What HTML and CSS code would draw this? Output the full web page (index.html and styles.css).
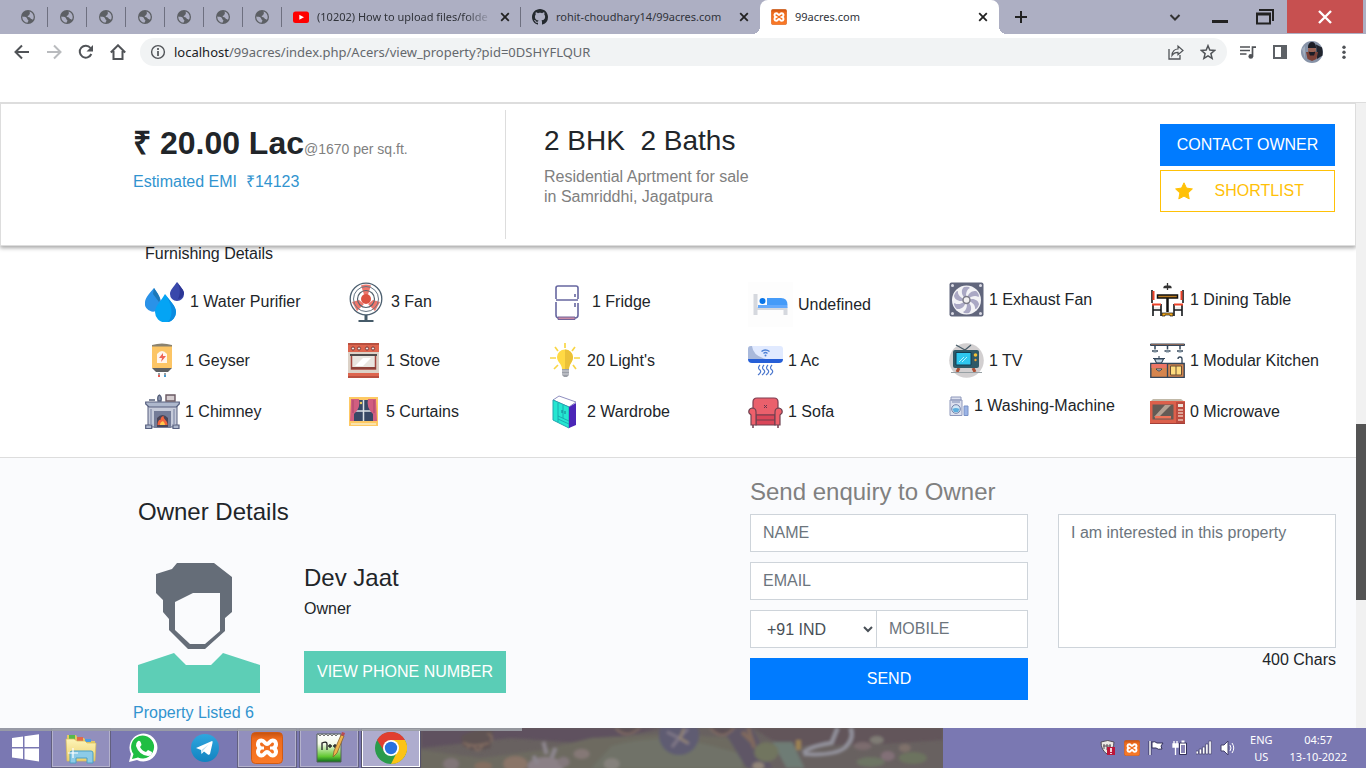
FILE: index.html
```html
<!DOCTYPE html>
<html lang="en">
<head>
<meta charset="utf-8">
<title>99acres.com</title>
<link rel="stylesheet" href="styles.css">
</head>
<body>
<svg class="defs" aria-hidden="true">
  <defs>
    <linearGradient id="orange" x1="0" y1="0" x2="0" y2="1"><stop offset="0" stop-color="#c4510f"/><stop offset=".2" stop-color="#ee6a1c"/><stop offset="1" stop-color="#fa7a28"/></linearGradient>
    <linearGradient id="paper" x1="0" y1="0" x2="0" y2="1"><stop offset="0" stop-color="#fff"/><stop offset=".35" stop-color="#f4fae8"/><stop offset=".8" stop-color="#62c832"/><stop offset="1" stop-color="#0c6a1c"/></linearGradient>
    <linearGradient id="folder" x1="0" y1="0" x2="0" y2="1"><stop offset="0" stop-color="#fdf4b8"/><stop offset="1" stop-color="#ecd06c"/></linearGradient>
    <linearGradient id="sky" x1="0" y1="0" x2="0" y2="1"><stop offset="0" stop-color="#2fa6df"/><stop offset="1" stop-color="#1283c0"/></linearGradient>
    <filter id="soft" x="-5%" y="-5%" width="110%" height="110%"><feGaussianBlur stdDeviation="1.500"/></filter>
  </defs>
  <symbol id="globe" viewBox="0 0 16 16"><circle cx="8" cy="8" r="7" fill="#5c5f64"/><path d="M2.300 7.500C4 8 5.500 7.500 6.500 8.500c1 1 .5 1.600 1.300 2.200.8.500.8 1 .2 1.700-.4.500-.3 1-.5 1.400C4.500 13.500 2.200 11 2.300 7.500z" fill="#adafc3"/><path d="M9.500 2.500c2.400.7 4.200 2.900 4.200 5.500 0 1-.3 2-.8 2.800-.5-.8-1.200-.9-2-.9-.6-1.200-1.400-1.700-2.700-1.800-.9-.5-.6-1.600.3-1.700 1-.2.700-1.200 1.200-1.700.6-.6 0-1.300-.2-2.200z" fill="#adafc3"/></symbol>
  <symbol id="close" viewBox="0 0 10 10"><path d="M1.200 1.200l7.600 7.600M8.800 1.200L1.200 8.800" fill="none" stroke="currentColor" stroke-width="1.800"/></symbol>
  <symbol id="xampp" viewBox="0 0 32 32"><rect x=".5" y=".5" width="31" height="31" rx="4" fill="url(#orange)" stroke="#cf5b14"/><path d="M10.500 8.500c3 0 3.300 3.500 5.500 3.500s2.500-3.500 5.500-3.500c3.500 0 5 4.500 1.500 7.500 3.500 3 2 7.500-1.500 7.500-3 0-3.300-3.500-5.500-3.500s-2.500 3.500-5.500 3.500C7 23.500 5.500 19 9 16 5.500 13 7 8.500 10.500 8.500z" fill="none" stroke="#fff" stroke-width="4"/><path d="M10 16h3M19 16h3" stroke="#fff" stroke-width="3"/></symbol>
</svg>

<header class="browser">
  <nav class="tabs" aria-label="Tabs">
    <button class="pin" aria-label="Tab 1"><svg><use href="#globe"/></svg></button>
    <button class="pin" aria-label="Tab 2"><svg><use href="#globe"/></svg></button>
    <button class="pin" aria-label="Tab 3"><svg><use href="#globe"/></svg></button>
    <button class="pin" aria-label="Tab 4"><svg><use href="#globe"/></svg></button>
    <button class="pin" aria-label="Tab 5"><svg><use href="#globe"/></svg></button>
    <button class="pin" aria-label="Tab 6"><svg><use href="#globe"/></svg></button>
    <button class="pin" aria-label="Tab 7"><svg><use href="#globe"/></svg></button>
    <div class="tab tab-ruled">
      <svg class="fav" viewBox="0 0 16 16"><rect y="2.500" width="16" height="11.500" rx="2.500" fill="#f00"/><path d="M6.300 5.700v5L11 8.200z" fill="#fff"/></svg>
      <span class="tab-title faded">(10202) How to upload files/folde</span>
      <button class="tab-x" aria-label="Close tab"><svg><use href="#close"/></svg></button>
    </div>
    <div class="tab">
      <svg class="fav" viewBox="0 0 16 16"><path fill="#24292f" d="M8 0C3.580 0 0 3.580 0 8c0 3.540 2.290 6.530 5.470 7.590.4.070.55-.17.55-.38 0-.19-.01-.82-.01-1.490-2.010.37-2.530-.49-2.690-.94-.09-.23-.48-.94-.82-1.130-.28-.15-.68-.52-.01-.53.63-.01 1.080.58 1.230.82.720 1.210 1.870.87 2.330.66.070-.52.280-.87.510-1.070-1.780-.2-3.640-.89-3.640-3.950 0-.87.310-1.590.82-2.150-.08-.2-.36-1.020.08-2.120 0 0 .67-.21 2.200.82.640-.18 1.320-.27 2-.27s1.360.09 2 .27c1.530-1.040 2.200-.82 2.200-.82.440 1.100.16 1.920.08 2.120.51.560.82 1.270.82 2.150 0 3.070-1.870 3.750-3.650 3.950.290.250.540.730.540 1.480 0 1.070-.01 1.930-.01 2.200 0 .21.150.46.550.38A8.010 8.010 0 0 0 16 8c0-4.420-3.580-8-8-8z"/></svg>
      <span class="tab-title">rohit-choudhary14/99acres.com</span>
      <button class="tab-x" aria-label="Close tab"><svg><use href="#close"/></svg></button>
    </div>
    <div class="tab tab-active">
      <svg class="fav"><use href="#xampp"/></svg>
      <span class="tab-title">99acres.com</span>
      <button class="tab-x" aria-label="Close tab"><svg><use href="#close"/></svg></button>
    </div>
    <button class="new-tab" aria-label="New tab"><svg viewBox="0 0 12 12"><path d="M6 0v12M0 6h12" stroke="#222" stroke-width="2"/></svg></button>
    <div class="window-controls">
      <button aria-label="Search tabs"><svg viewBox="0 0 18 16"><path d="M4.500 6L9 10.500 13.500 6" fill="none" stroke="#333" stroke-width="2"/></svg></button>
      <button aria-label="Minimize"><svg viewBox="0 0 18 16"><path d="M1 12.500h16" stroke="#222" stroke-width="3"/></svg></button>
      <button aria-label="Restore"><svg viewBox="0 0 18 16"><path d="M1 4.500h13v10H1zM1 5.500h13" fill="none" stroke="#222" stroke-width="2"/><path d="M3 1h14v11" fill="none" stroke="#222" stroke-width="2"/></svg></button>
      <button class="window-close" aria-label="Close"><svg viewBox="0 0 18 16"><path d="M3 2l12 12M15 2L3 14" stroke="#fff" stroke-width="2.400"/></svg></button>
    </div>
  </nav>
  <div class="toolbar">
    <button aria-label="Back"><svg viewBox="0 0 16 16"><path d="M15 8H2M8 1.500L1.500 8 8 14.500" fill="none" stroke="#505357" stroke-width="2"/></svg></button>
    <button aria-label="Forward"><svg viewBox="0 0 16 16"><path d="M1 8h13M8 1.500L14.500 8 8 14.500" fill="none" stroke="#b9bbbe" stroke-width="2"/></svg></button>
    <button aria-label="Reload"><svg viewBox="0 0 16 16"><path d="M13.300 10A6 6 0 1 1 12.500 4" fill="none" stroke="#505357" stroke-width="2"/><path d="M15 1v6.500H8.500z" fill="#505357"/></svg></button>
    <button aria-label="Home"><svg viewBox="0 0 16 16"><path d="M.8 8.500L8 1.300l7.200 7.200M3.500 7v8h9V7" fill="none" stroke="#505357" stroke-width="2"/></svg></button>
    <div class="omnibox">
      <svg class="info" viewBox="0 0 16 16"><circle cx="8" cy="8" r="6.400" fill="none" stroke="#505357" stroke-width="1.400"/><path d="M8 7v5M8 4v2" stroke="#505357" stroke-width="1.700"/></svg>
      <div class="url" contenteditable="true" role="textbox" aria-label="Address" spellcheck="false"><span class="host">localhost</span>/99acres/index.php/Acers/view_property?pid=0DSHYFLQUR</div>
      <button aria-label="Share"><svg viewBox="0 0 16 16"><path d="M1 5v10h11v-4" fill="none" stroke="#505357" stroke-width="1.300"/><path d="M4 11.500C4 7 7 5 10 5V2l5 4.500-5 4.300V8.300C7.500 8.300 5.500 9 4 11.500z" fill="none" stroke="#505357" stroke-width="1.200"/></svg></button>
      <button aria-label="Bookmark"><svg viewBox="0 0 16 16"><path d="M8 1.700l1.800 4.400 4.800.4-3.700 3.100 1.200 4.700L8 11.800l-4.100 2.500 1.200-4.700L1.400 6.500l4.800-.4z" fill="none" stroke="#505357" stroke-width="1.500"/></svg></button>
    </div>
    <button aria-label="Media"><svg viewBox="0 0 16 16"><path d="M0 3h10M0 6.500h10M0 10h6.500" stroke="#505357" stroke-width="1.600"/><path d="M12.500 12.500V3.200H16" fill="none" stroke="#505357" stroke-width="1.700"/><circle cx="10.800" cy="12.400" r="2.400" fill="#505357"/></svg></button>
    <button aria-label="Side panel"><svg viewBox="0 0 16 16"><path d="M1 1h14v14H1z" fill="#5d6166"/><path d="M3 3h6v10H3z" fill="#fff"/></svg></button>
    <button class="avatar" aria-label="Profile"><svg viewBox="0 0 22 22"><circle cx="11" cy="11" r="11" fill="#8793a8"/><path d="M15 3.500l6 3q1 4 .5 8L16 18z" fill="#20242d"/><path d="M5 11l1.500 7 4.500 2 4.500-2L17 11z" fill="#7c4238"/><circle cx="11" cy="9" r="4" fill="#9a6456"/><path d="M7 6a4 5 0 0 1 8 0v1H7zM7.500 10.500q3.500 1 7 0L13 14.500H9z" fill="#1b1d26"/><path d="M1 8l3-3v13z" fill="#a2adbd"/></svg></button>
    <button aria-label="Menu"><svg viewBox="0 0 16 16"><circle cx="8" cy="3.200" r="1.700" fill="#505357"/><circle cx="8" cy="8.200" r="1.700" fill="#505357"/><circle cx="8" cy="13.200" r="1.700" fill="#505357"/></svg></button>
  </div>
</header>

<div class="viewport">
  <main class="page">
    <section class="summary">
      <div class="price">
        <p><strong>₹ 20.00 Lac</strong><small>@1670 per sq.ft.</small></p>
        <a href="#emi">Estimated EMI&nbsp; ₹14123</a>
      </div>
      <div class="config">
        <h1>2 BHK&nbsp; 2 Baths</h1>
        <p>Residential Aprtment for sale<br>in Samriddhi, Jagatpura</p>
      </div>
      <div class="actions">
        <button class="btn btn-blue">CONTACT OWNER</button>
        <button class="btn btn-star"><svg viewBox="0 0 18 18"><path d="M9 .8l2.500 5.300 5.900.8-4.300 4.100 1.100 5.900L9 14.100l-5.200 2.800L4.900 11 .6 6.900l5.900-.8z" fill="#ffc107" stroke="#ffc107" stroke-linejoin="round"/></svg><span>SHORTLIST</span></button>
      </div>
    </section>

    <section class="furnishing">
      <h2>Furnishing Details</h2>
      <ul>
        <li><svg class="i40" viewBox="0 0 40 40"><path d="M9 6C13 12 17 17 16 23a8 8 0 0 1-16-3C.5 15 5 11 9 6z" fill="#2a92e8"/><path d="M9 6C13 12 17 17 14 20L8 12z" fill="#1c78b8"/><path d="M32 0c3.500 5 7 8 7 12a7 7 0 0 1-14 0c0-4 3.500-7 7-12z" fill="#3948ab"/><path d="M32 0c3 5 4 11 1 17a7 7 0 0 0 6-6c0-3-4-7-7-11z" fill="#2c3695"/><path d="M20 12c5 7 11 12 11 18a10.500 10.500 0 0 1-21 0c0-6 6-11 10-18z" fill="#04a4f4"/><path d="M20 12c5 7 11 12 11 18a10 10 0 0 1-8 10c6-7 4-18-3-28z" fill="#0b8be0"/></svg>1 Water Purifier</li>
        <li><svg class="i40" viewBox="0 0 40 40"><circle cx="20" cy="17" r="15.800" fill="#fff" stroke="#4d6070" stroke-width="1.300"/><path d="M15 3.500q5-2 10 0l-3 9h-4zM34 20l-5 9-7-7 5-4zM6 20l5 9 7-7-5-4z" fill="#ef766b"/><circle cx="20" cy="17" r="12.500" fill="none" stroke="#667482"/><circle cx="20" cy="17" r="8.500" fill="none" stroke="#56636e" stroke-width="1.200"/><circle cx="20" cy="17" r="5" fill="#dc5342"/><path d="M18.500 33h3v5h6v2h-15v-2h6z" fill="#465b69"/></svg>3 Fan</li>
        <li><svg class="i40" viewBox="0 0 40 40"><path d="M9 17V6q0-2 2-2h18q2 0 2 2v11M9 18h22M9 20v13q0 3 3 3h16q3 0 3-3V21M28 12v3M28 21v4" fill="none" stroke="#6767a0" stroke-width="1.600"/><path d="M11 35h17v2.500H11z" fill="#c98ba5" stroke="#72649a"/></svg>1 Fridge</li>
        <li><svg class="i45" viewBox="0 0 45 45"><path d="M0 0h45v45H0z" fill="#fdfdfd"/><path d="M5.500 12h4v13h30v8h-4v-5h-26v5h-4z" fill="#d5d8de"/><path d="M10 23h29.500v3H10z" fill="#65aafc"/><path d="M19 16h14q6.500 0 6.500 7H19z" fill="#459bf8"/><circle cx="14.500" cy="19" r="3" fill="#0975e8"/></svg>Undefined</li>
        <li><svg class="i35" viewBox="0 0 35 35"><rect x=".5" y=".5" width="34" height="34" rx="2" fill="#61667c"/><circle cx="17.500" cy="18" r="14.500" fill="#f3f3f6"/><g fill="#aaa8c4"><path id="blade" d="M16 16C12 13 12 7 15 5q5-1 6 1c-4 2-4 6-4 10z"/><use href="#blade" transform="rotate(60 17.500 18)"/><use href="#blade" transform="rotate(120 17.500 18)"/><use href="#blade" transform="rotate(180 17.500 18)"/><use href="#blade" transform="rotate(240 17.500 18)"/><use href="#blade" transform="rotate(300 17.500 18)"/></g><circle cx="17.500" cy="18" r="3.500" fill="#f2f0f0" stroke="#7c7c88" stroke-width="1.500"/><g fill="#dcdce6"><circle cx="3.500" cy="3.500" r="1.500"/><circle cx="31.500" cy="3.500" r="1.500"/><circle cx="3.500" cy="31.500" r="1.500"/><circle cx="31.500" cy="31.500" r="1.500"/></g></svg>1 Exhaust Fan</li>
        <li><svg class="i35" viewBox="0 0 35 35"><path d="M17.500 1v7M14 5.500q0-1.500 3.500-1.500t3.500 1.500z" fill="#555" stroke="#333" stroke-width="1.300"/><path d="M7.500 13h20v3h-20z" fill="#b87b21" stroke="#111" stroke-width="1.500"/><path d="M17.500 16v14" stroke="#111" stroke-width="2.500"/><path d="M12 34v-3h11v3h-3v-1h-5v1z" fill="#f0a51b" stroke="#111" stroke-width=".7"/><path d="M2 8v13M11 22v12M3 23v11M3 28h8M33 8v13M24 22v12M32 23v11M24 28h8" fill="none" stroke="#15171a" stroke-width="1.600"/><path d="M3.500 9v9M31.500 9v9M2 22.500h9M24 22.500h9" stroke="#ed4228" stroke-width="2"/><path d="M4 26h6M25 26h6" stroke="#ddd"/></svg>1 Dining Table</li>

        <li><svg class="i35" viewBox="0 0 35 35"><path d="M7 3q10-3 20 0v22H7z" fill="#fcc565"/><path d="M7 2q10-3 20 0v1.500H7z" fill="#8a826f"/><path d="M7 25h20l-4 4H11z" fill="#5e6062"/><path d="M12 20v-9q5-6 10 0v9z" fill="#fff6ee"/><path d="M18 10l-4 5h3l-1 4 5-6h-3z" fill="#ef6556"/><path d="M14 30v2M20 30v2" stroke="#9aa1a5" stroke-width="2"/><path d="M14 32v2" stroke="#ed5950" stroke-width="2"/><path d="M20 32v2" stroke="#469bd0" stroke-width="2"/></svg>1 Geyser</li>
        <li><svg class="i35" viewBox="0 0 35 35"><path d="M2 2h31v33H2z" fill="#dcd2c7"/><path d="M2 1h31v8H2zM2 30h31v3H2z" fill="#dd654e"/><path d="M2 0h31v2H2zM2 33h31v2H2z" fill="#b94f3f"/><g fill="#eae3dc" stroke="#7f3938"><circle cx="7" cy="5.500" r="1.600"/><circle cx="13" cy="5.500" r="1.600"/><circle cx="21" cy="5.500" r="1.600"/><circle cx="27" cy="5.500" r="1.600"/></g><path d="M4 11h27v2H4z" fill="#4f4b4b"/><path d="M5.500 13v13h24V13" fill="#e9e5df" stroke="#a4463d" stroke-width="1.500"/><path d="M9 23l8-8h8l-8 8z" fill="#fff"/><path d="M5 25h25" stroke="#8d4138" stroke-width="2"/></svg>1 Stove</li>
        <li><svg class="i35" viewBox="0 0 35 35"><path d="M10 14a8 7.500 0 0 1 16 0c0 5-4 7-4 12h-7c0-5-5-7-5-12z" fill="#ffd944"/><path d="M18 6.500a8 8 0 0 1 8 7.500c0 5-4 7-4 12h-4z" fill="#ebc138"/><path d="M15 26h7v6l-2 2h-3l-2-2z" fill="#9b9fa7"/><path d="M15 28h7M15 31h7" stroke="#d5d6dc"/><path d="M18 0v5M8 4l3 4M28 4l-3 4M3 15h6M27 15h6M7 26l4-4M29 26l-3-4" stroke="#f8d647" stroke-width="1.700"/></svg>20 Light's</li>
        <li><svg class="i35" viewBox="0 0 35 35"><path d="M0 6q0-3 3-3h29q3 0 3 3v10H0z" fill="#e1eaff"/><path d="M0 6q0-3 3-3h1q1 10 14 13H0z" fill="#a9b9db"/><path d="M0 16h35q0 4-4 4H4q-4 0-4-4z" fill="#265fd7"/><path d="M13.500 8.500q4-3 8 0M15.500 10.500q2-2 4 0" fill="none" stroke="#4f82d6" stroke-width="1.300"/><circle cx="17.500" cy="12.500" r="1" fill="#4f82d6"/><path d="M12 22q-3 3 0 5 2 2-2 5M16 22q-3 3 0 5 2 2-2 5M20 22q-3 3 0 5 2 2-2 5M24 22q-3 3 0 5 2 2-2 5" fill="none" stroke="#4c78ce" stroke-width="1.200"/></svg>1 Ac</li>
        <li><svg class="i35" viewBox="0 0 35 35"><circle cx="17.500" cy="17.500" r="17.300" fill="#d2cfd0"/><path d="M7 2l9 5 6-5" fill="none" stroke="#475c68" stroke-width="1.300"/><path d="M8 29l2-4M26 29l-2-4" stroke="#ad5035" stroke-width="3"/><rect x="4" y="7" width="26" height="18" rx="2" fill="#2f5967"/><path d="M7 9.500h15v12.500H7z" fill="#2ec7ef" stroke="#123d52"/><path d="M10 19l5-5M13 19l5-5" stroke="#b5f1ff"/><circle cx="26.500" cy="12" r="1.800" fill="#f2c233"/><circle cx="26.500" cy="17" r="1.200" fill="#f2a233"/><path d="M2 29.500h31" stroke="#97a0a4"/></svg>1 TV</li>
        <li><svg class="i35" viewBox="0 0 35 35"><path d="M.5 1h34v1.500H.5z" fill="#df8755" stroke="#34465a"/><path d="M5 3v3M17.500 3v3M30 3v3" stroke="#34465a" stroke-width="1.500"/><path d="M2 8h6M14.500 8h6M27 8h6" stroke="#34465a" stroke-width="1.500"/><path d="M3.500 7.500q1.500-2.500 3 0v2h-3zM16 7.500q1.500-2.500 3 0v2h-3zM28.500 7.500q1.500-2.500 3 0v2h-3z" fill="#7a8c99"/><path d="M4.500 16h9l-2 4h-5zM3 15.500h12M9 15v-2" fill="#c4d6e2" stroke="#34465a" stroke-width="1.100"/><path d="M28 16q0-2 2-2t2 2v4" fill="none" stroke="#34465a" stroke-width="1.300"/><path d="M.8 20.500h33.400v14H.8z" fill="#d5854e" stroke="#34465a" stroke-width="1.400"/><path d="M1.500 21h15.500v4H1.500z" fill="#eb7566"/><path d="M17.500 21v14" stroke="#34465a" stroke-width="1.300"/><path d="M20.500 23h11v9h-11zM26 23v9" fill="#ffdc7e" stroke="#694c33"/><path d="M6 26q3 4 6 0z" fill="#f0e2d3" stroke="#34465a"/></svg>1 Modular Kitchen</li>

        <li><svg class="i35" viewBox="0 0 35 35"><path d="M3 12h29v21H3z" fill="#c6cbda" stroke="#565f7f"/><path d="M.7 8h33.600v2l-3 3H4l-3.300-3zM.7 31h6v3.500h-6zM28 31h6v3.500h-6z" fill="#aeb8cd" stroke="#565f7f" stroke-width="1.200"/><path d="M9 17h17v17H9z" fill="#747c98"/><path d="M12 33v-9q5.500-6 11 0v9z" fill="#4a4659"/><path d="M12.500 31c0-4 2-6 3-5 0-3 2-4 3-4 0 4 4 4 4 9z" fill="#f2643d"/><path d="M15 31q0-3 3-4 2 2 2 4z" fill="#ffc94e"/><path d="M21 1h9v6h-9z" fill="#d5cdd0" stroke="#6a5963" stroke-width="1.400"/><path d="M4 6h6M13 7q-1-5 1.500-6 2.500 2 1.500 6z" fill="#8b95b0" stroke="#545e78" stroke-width="1.300"/><path d="M6 15v15M29 15v15" stroke="#757f9e"/></svg>1 Chimney</li>
        <li><svg class="i35" viewBox="0 0 35 35"><path d="M3 3h29v29H3z" fill="#fec963"/><path d="M8 6h20v21H8z" fill="#374866"/><path d="M17.500 6v21M8 17h20" stroke="#dce2e8" stroke-width="1.500"/><path d="M5 5h8q2 9-5 15v7H4zM30 5h-8q-2 9 5 15v7h4z" fill="#d15e80"/><path d="M7 6v13M28 6v13" stroke="#ab466c"/><circle cx="15" cy="9" r="1.200" fill="#f2ce59"/><path d="M5 30h25" stroke="#fae3ac" stroke-width="2"/></svg>5 Curtains</li>
        <li><svg class="i35" viewBox="0 0 35 35"><path d="M6 6l6-4 17 6-7 5z" fill="#fff" stroke="#8f8fc0"/><path d="M6 6l16 7v21L6 26z" fill="#24e7d1" stroke="#22a6b0"/><path d="M22 13l7-4v22l-7 3z" fill="#4b26b7"/><path d="M11 9v19M16 11v13M11 22l11 5M11 25l11 5" fill="none" stroke="#169daa" stroke-width=".8"/><path d="M15 16v3M18 17v3" stroke="#177d90"/></svg>2 Wardrobe</li>
        <li><svg class="i35" viewBox="0 0 35 35"><path d="M5 15V8q0-4 4-4h17q4 0 4 4v7l-3 6H8z" fill="#ea606c" stroke="#7e3d50" stroke-width="1.200"/><path d="M8 21h19v5H8zM8 26h19v5H8z" fill="#da4658" stroke="#703c4d" stroke-width="1.200"/><path d="M8 31V18q0-4-4-4-4 1-3 5l2 2v10zM27 31V18q0-4 4-4 4 1 3 5l-2 2v10z" fill="#ef606b" stroke="#704352" stroke-width="1.200"/><path d="M5 31v3M30 31v3" stroke="#703c4d" stroke-width="1.500"/><path d="M16 11l3 3M19 11l-3 3" stroke="#69374d"/></svg>1 Sofa</li>
        <li><svg class="i20" viewBox="0 0 20 20"><path d="M2 1h10v3H2zM1 4h12v15.500H1z" fill="#dce0ee" stroke="#8e98bb"/><path d="M3 6h8" stroke="#7f8cb3"/><circle cx="7" cy="13" r="4.300" fill="#cfe6f5" stroke="#7581a9"/><path d="M3.500 13q3-2 7 0l-1.500 3H5z" fill="#5caede"/><path d="M15 10h4v9.500h-4z" fill="#9ab3e5" stroke="#7a92c6"/></svg>1 Washing-Machine</li>
        <li><svg class="i35" viewBox="0 0 35 35"><path d="M0 8l3-3h28l4 3z" fill="#c1b9a8"/><path d="M0 7h35v23H0z" fill="#dc604b"/><path d="M2.500 10.500h21v15h-21z" fill="#645b55"/><path d="M4 23L15 11h6L8 24z" fill="#b4a192"/><path d="M5 22h16v2.500H5z" fill="#f07358"/><path d="M26 8h9v21h-9z" fill="#bc4b3f"/><path d="M28 10h5v3h-5z" fill="#eee1d6"/><path d="M28 16h5M28 19h5M28 22h5M28 26h5" stroke="#ecc1b4" stroke-width="1.500"/><path d="M0 29h35v1H0z" fill="#a33f38"/></svg>0 Microwave</li>
      </ul>
    </section>

    <section class="contact">
      <div class="owner">
        <h2>Owner Details</h2>
        <div class="owner-card">
          <svg class="portrait" viewBox="0 0 122 130"><path d="M20 0h37l19 15v34l-7 6v13L68 86H50L31 67V56l-6-7V37l-7-7V11l15-5z" fill="none"/><path d="M39 0h37l18 14v35l-7 6v13L67 86H50L31 67V56l-6-7V37l-7-7V11l16-5z" fill="#656d78"/><path d="M37 39l18-9h27v38L67 81H52L37 67z" fill="#fafbfd"/><path d="M0 102l36-12 12 12h25l12-12 37 12v28H0z" fill="#5dceb6"/></svg>
          <div class="owner-text">
            <h3>Dev Jaat</h3>
            <p>Owner</p>
            <button class="btn btn-green">VIEW PHONE NUMBER</button>
          </div>
        </div>
        <a href="#listed">Property Listed 6</a>
      </div>
      <form class="enquiry">
        <h2>Send enquiry to Owner</h2>
        <div class="fields">
          <input type="text" placeholder="NAME" aria-label="Name">
          <input type="email" placeholder="EMAIL" aria-label="Email">
          <div class="phone">
            <select aria-label="Country code"><option>+91 IND</option></select>
            <input type="tel" placeholder="MOBILE" aria-label="Mobile">
          </div>
          <button class="btn btn-blue" type="button">SEND</button>
        </div>
        <div class="message">
          <textarea placeholder="I am interested in this property" aria-label="Message"></textarea>
          <p>400 Chars</p>
        </div>
      </form>
    </section>
  </main>
  <div class="scrollbar"><div class="thumb"></div></div>
</div>

<footer class="taskbar">
  <div class="status-strip"></div>
  <button class="start" aria-label="Start"><svg viewBox="0 0 28 28"><path d="M0 4l11-1.500V13H0zM12.500 2.300L27 .3V13H12.500zM0 14.500h11V25L0 23.500zM12.500 14.500H27V27.500l-14.500-2.300z" fill="#fff"/></svg></button>
  <button class="app open" aria-label="File Explorer"><svg viewBox="0 0 32 32"><path d="M2 3h9l2 3h6l2 3h9v17H2z" fill="#e4c965"/><path d="M4 3h6v4H4z" fill="#57b94c"/><path d="M12 5h6v4h-6z" fill="#e2694b"/><path d="M20 7h6v3h-6z" fill="#4d9ce0"/><path d="M1 7h8l3 2h8l2 2h9l-1 18H2z" fill="url(#folder)" stroke="#d7ba57" stroke-width=".7"/><path d="M5 31V21q0-2 2-2h19q2 0 2 2v10h-6v-5H11v5z" fill="#8ccbe7" stroke="#4c9fc4"/><path d="M8 16v10M3 21h10" stroke="#fff" stroke-width="1.200"/></svg></button>
  <button class="app" aria-label="WhatsApp"><svg viewBox="0 0 32 32"><path d="M2 30l2-8A14 14 0 1 1 10 28z" fill="#fff"/><path d="M5 27l1.500-5A11.500 11.500 0 1 1 11 25.500z" fill="#20be43"/><path d="M11 9q2-1 3 2l.5 2-1.500 2q2 4 6 5l2-2 4 2q0 4-4 4-9-1-12-10-.5-3 2-5z" fill="#fff"/></svg></button>
  <button class="app" aria-label="Telegram"><svg viewBox="0 0 32 32"><circle cx="16" cy="16" r="14" fill="url(#sky)"/><path d="M7 16l16-7q1 0 .5 2L21 22q-1 1.500-2.500.3L15 19.500l-2.500 2.500-.5-4z" fill="#fff"/><path d="M12.500 18l7-5.500-5.500 6.300-1.500 2.700z" fill="#bfe0f2"/></svg></button>
  <button class="app open" aria-label="XAMPP"><svg><use href="#xampp"/></svg></button>
  <button class="app open" aria-label="Notepad++"><svg viewBox="0 0 32 32"><path d="M4 2h24v28H4z" fill="url(#paper)" stroke="#526058"/><path d="M5 2l2 2 2-2 2 2 2-2 2 2 2-2 2 2 2-2 2 2 2-2" fill="none" stroke="#777"/><path d="M9 18v-7q5-2 5 1v6M15 14h4M17 12v4M20 14h4M22 12v4" fill="none" stroke="#222" stroke-width="1.300"/><path d="M20 25l1-6L28 3l3 1-7 17z" fill="#efb34b" stroke="#8a622e" stroke-width=".8"/><path d="M28 3l1-3 3 1-1 3z" fill="#b94950"/></svg></button>
  <button class="app current" aria-label="Chrome"><svg viewBox="0 0 32 32"><circle cx="16" cy="16" r="16" fill="#2a9b4b"/><path d="M2.100 8A16 16 0 0 1 29.900 8L27 15 16 16 9 19z" fill="#e13e30"/><path d="M16 8h13.900A16 16 0 0 1 16 32l6-12z" fill="#fbc316"/><circle cx="16" cy="16" r="8" fill="#fff"/><circle cx="16" cy="16" r="6.200" fill="#2871df"/></svg></button>
  <svg class="wallpaper" viewBox="0 0 520 40" preserveAspectRatio="none" aria-hidden="true">
    <path d="M0 0h520v40H0z" fill="#686160"/>
    <g filter="url(#soft)">
      <path d="M0 0h240l-70 16-80-6-90 10z" fill="#5e515e"/><path d="M0 22l60 8 60-8 50-12 80-4 60 4 20 34H0z" fill="#6d6a60"/>
      <path d="M190 18q50-14 100 0l30 8v14H170z" fill="#6f7268"/><path d="M300 0h30l20 40h-26z" fill="#5e5666"/><path d="M330 0h190v12l-60 4-100 2z" fill="#62545a"/>
      <path d="M40 8q16-8 32-6l-3 18q-18 6-28-3z" fill="#5e5252"/><path d="M42 15q10 5 26 0M46 20q5-6 8 0t8-4M66 6q6 0 4 8" fill="none" stroke="#826c61" stroke-width="2"/>
      <circle cx="257" cy="7" r="20" fill="#5e5c72"/><path d="M257 10l-12-6M257 10l-7 9M257 10l9-9M257 10l10 6" stroke="#7f7786" stroke-width="3"/><path d="M262 0l-4 10 8 5" fill="none" stroke="#97866f" stroke-width="2"/>
      <path d="M194 0q10 12 24 0M288 0q12 14 24 0" fill="#5c5055" stroke="#806a63" stroke-width="2"/>
      <ellipse cx="124" cy="38" rx="18" ry="9" fill="#8b8086"/><ellipse cx="94" cy="36" rx="12" ry="8" fill="#8a7468"/><path d="M122 14l3 12M134 20l-4 10M112 28l4 8" stroke="#8d868e" stroke-width="4"/><ellipse cx="142" cy="34" rx="6" ry="5" fill="#83787c"/><ellipse cx="160" cy="26" rx="8" ry="5" fill="#857876"/><ellipse cx="190" cy="36" rx="8" ry="6" fill="#85817b"/><ellipse cx="30" cy="36" rx="8" ry="6" fill="#817678"/><ellipse cx="62" cy="38" rx="9" ry="4" fill="#846e60"/>
      <path d="M320 4l12 12M326 0l6 20" stroke="#80695d" stroke-width="4"/><path d="M350 14h20l12 26h-18z" fill="#6e7b75"/><path d="M376 12v10" stroke="#9d8352" stroke-width="5"/><path d="M381 25q4-6 28-10l6-15M381 26q30 2 41-6 10-9 6-20" fill="none" stroke="#93929c" stroke-width="4"/>
      <ellipse cx="344" cy="24" rx="12" ry="10" fill="#71745f"/><ellipse cx="440" cy="18" rx="9" ry="4" fill="#7c6c6e"/><ellipse cx="448" cy="34" rx="14" ry="5" fill="#6d7463"/><ellipse cx="465" cy="28" rx="7" ry="5" fill="#826f77"/><ellipse cx="490" cy="30" rx="14" ry="6" fill="#6c735e"/><ellipse cx="454" cy="12" rx="7" ry="4" fill="#7f7b75"/><ellipse cx="482" cy="20" rx="6" ry="4" fill="#7f716b"/><ellipse cx="336" cy="38" rx="6" ry="4" fill="#918478"/>
    </g>
  </svg>
  <div class="tray">
    <button aria-label="Security"><svg viewBox="0 0 16 16"><path d="M1 2q7-3 13 0 0 8-7 12Q1 10 1 2z" fill="#ece9e3" stroke="#504858"/><path d="M4 4v5M7 4v6M10 4v4M3 6h8" stroke="#574e57"/><path d="M7 7h8v8H7z" fill="#bd1639"/><path d="M11 8v4M11 13v1" stroke="#fff" stroke-width="1.600"/></svg></button>
    <button aria-label="XAMPP"><svg><use href="#xampp"/></svg></button>
    <button aria-label="Action Center"><svg viewBox="0 0 16 16"><path d="M2 1v14" stroke="#33315a" stroke-width="3"/><path d="M4 2q3-1 5 1h6l-2 3 1 3q-4 1-6-1H4z" fill="#fff" stroke="#33315a"/><path d="M2 1v14" stroke="#fff" stroke-width="1.500"/></svg></button>
    <button aria-label="Battery"><svg viewBox="0 0 16 16"><path d="M7.500 3h7v11.500h-7z" fill="#fff" stroke="#33315a"/><path d="M9 5h4v8H9z" fill="#8984b5"/><path d="M9.500 1.500h3" stroke="#fff" stroke-width="2"/><path d="M1 4h5v3H1zM2 1v3M5 1v3M3.500 7v8" fill="#fff" stroke="#fff" stroke-width="1.300"/></svg></button>
    <button aria-label="Network"><svg viewBox="0 0 16 16"><g fill="#fff" stroke="#44406c" stroke-width=".7"><path d="M0 11h2.500v3H0zM3.200 9h2.500v5H3.200zM6.400 7h2.500v7H6.400zM9.600 4h2.500v10H9.600zM12.800 1h2.500v13h-2.500z"/></g></svg></button>
    <button aria-label="Volume"><svg viewBox="0 0 16 16"><path d="M1 5h3l4-4v14l-4-4H1z" fill="#fff" stroke="#44406c"/><path d="M10 5q2 3 0 6M12 3q3.500 5 0 10" fill="none" stroke="#fff"/></svg></button>
    <div class="lang">ENG<br>US</div>
    <time>04:57<br>13-10-2022</time>
  </div>
</footer>
</body>
</html>
```
FILE: styles.css
```css
* { box-sizing: border-box; }
body { margin: 0; height: 100vh; display: flex; flex-direction: column; overflow: hidden; background: #fff; color: #212529; font: 16px/24px "Liberation Sans", Arial, sans-serif; }
button, input, select, textarea { font: inherit; color: inherit; }
button { border: 0; padding: 0; background: none; }
svg { display: block; flex: none; }
h1, h2, h3, p, ul { margin: 0; padding: 0; font-weight: 400; }
a { color: #3194cf; text-decoration: none; }
.defs { position: absolute; width: 0; height: 0; }

/* Browser frame */
.browser { flex: none; height: 102px; font: 11px/16px "Noto Sans", "Open Sans", sans-serif; }
.tabs { height: 34px; padding-left: 9px; display: flex; background: #adafc3; }
.pin { width: 39px; padding-right: 2px; display: grid; place-items: center; position: relative; }
.pin svg { width: 16px; height: 16px; }
.pin::after, .tab-ruled::after { content: ""; position: absolute; right: 0; top: 7px; height: 20px; width: 1px; background: #6e7080; }
.tab { width: 239px; padding: 0 11px; display: flex; align-items: center; gap: 8px; position: relative; color: #30333a; }
.fav { width: 16px; height: 16px; }
.tab-title { flex: 1; overflow: hidden; white-space: nowrap; }
.faded { -webkit-mask-image: linear-gradient(to right, #000 85%, transparent); mask-image: linear-gradient(to right, #000 85%, transparent); }
.tab-x { color: #222; }
.tab-x svg { width: 10px; height: 10px; }
.tab-active { background: #fff; border-radius: 8px 8px 0 0; }
.tab-active::before, .tab-active::after { content: ""; position: absolute; bottom: 0; width: 8px; height: 8px; }
.tab-active::before { left: -8px; background: radial-gradient(circle at 0 0, #adafc3 8px, #fff 8px); }
.tab-active::after { right: -8px; background: radial-gradient(circle at 100% 0, #adafc3 8px, #fff 8px); }
.new-tab { width: 44px; display: grid; place-items: center; }
.new-tab svg { width: 12px; height: 12px; }
.window-controls { margin-left: auto; display: flex; padding-right: 3px; }
.window-controls button { width: 45px; height: 33px; display: grid; place-items: center; }
.window-controls svg { width: 18px; height: 16px; }
.window-controls .window-close { width: 76px; background: #c75050; }
.toolbar { height: 36px; padding: 0 14px; display: flex; align-items: center; gap: 16px; }
.toolbar button svg { width: 16px; height: 16px; }
.omnibox { flex: 1; height: 28px; margin: 0 -3px 0 -2px; padding: 0 11px 0 10px; display: flex; align-items: center; gap: 16px; border-radius: 14px; background: #f1f3f4; }
.info { width: 16px; height: 16px; margin-right: -8px; }
.url { flex: 1; font-size: 13px; line-height: 20px; color: #64686d; white-space: nowrap; outline: 0; }
.host { color: #202124; }
.avatar { margin: 0 -3px; }
.toolbar .avatar svg { width: 22px; height: 22px; }

/* Page */
.viewport { flex: 1; min-height: 0; display: flex; }
.page { flex: 1; min-width: 0; overflow: hidden; border-top: 1px solid #ddd; }
.scrollbar { width: 10px; padding-top: 321px; background: #f1f1f1; border-top: 1px solid #ddd; }
.thumb { height: 176px; background: #545454; }
.summary { height: 143px; padding: 6px 20px 6px 132px; display: flex; border: 1px solid #ddd; position: relative; background: #fff; box-shadow: 0 2px 4px rgba(0, 0, 0, .35); }
.price { width: 373px; padding-top: 13px; border-right: 1px solid #ddd; }
.price p { line-height: 40px; white-space: nowrap; }
.price strong { font-size: 32px; }
.price small { font-size: 14px; color: #808080; }
.price a { display: block; margin-top: 1px; }
.config { flex: 1; padding: 13px 0 0 38px; }
.config h1 { font-size: 28px; line-height: 36px; }
.config p { margin-top: 8px; line-height: 20px; color: #808080; }
.actions { width: 175px; padding-top: 14px; display: flex; flex-direction: column; gap: 4px; }
.btn { height: 42px; border: 1px solid transparent; color: #fff; line-height: 24px; }
.btn-blue { background: #007bff; }
.btn-green { width: 202px; background: #5acdb6; }
.btn-star { padding: 0 30px 0 14px; display: flex; justify-content: space-between; align-items: center; border-color: #ffc107; color: #ffc107; }
.btn-star svg { width: 18px; height: 18px; }

.furnishing { padding: 0 5px 28px 145px; }
.furnishing h2 { font-size: 16px; line-height: 16px; }
.furnishing ul { margin-top: 20px; list-style: none; display: grid; grid-template-columns: repeat(6, 1fr); row-gap: 16px; }
.furnishing li { display: flex; align-items: center; align-self: start; gap: 5px; white-space: nowrap; }
.i20 { width: 20px; height: 20px; }
.i35 { width: 35px; height: 35px; }
.i40 { width: 40px; height: 40px; }
.i45 { width: 45px; height: 45px; }

.contact { height: 300px; padding: 20px 20px 0 133px; display: flex; border-top: 1px solid #ddd; background: #fafbfd; }
.owner { flex: 1; padding-top: 20px; }
.owner h2 { padding-left: 5px; font-size: 24px; line-height: 28px; }
.owner-card { margin: 37px 0 8px 5px; display: flex; align-items: flex-end; gap: 44px; }
.portrait { width: 122px; height: 130px; }
.owner h3 { font-size: 24px; line-height: 28px; }
.owner p { margin: 5px 0 30px; }
.enquiry { width: 586px; display: grid; grid-template-columns: 1fr 1fr; grid-template-rows: 28px auto; gap: 8px 30px; }
.enquiry h2 { grid-column: 1 / -1; font-size: 24px; line-height: 28px; color: #808080; }
.fields { display: flex; flex-direction: column; gap: 10px; }
.fields input, .fields select, .message textarea { width: 100%; height: 38px; padding: 6px 12px; border: 1px solid #ced4da; border-radius: 0; background: #fff; color: #495057; }
.enquiry ::placeholder { color: #6c757d; opacity: 1; }
.phone { display: flex; }
.fields select { width: 126px; border-right: 0; padding-right: 0; }
.phone input { flex: 1; min-width: 0; }
.message textarea { display: block; height: 134px; resize: none; }
.message p { text-align: right; }

/* Taskbar */
.taskbar { flex: none; height: 40px; display: flex; position: relative; background: #7a78b2; color: #fff; font: 11px/17px "Noto Sans", "Open Sans", sans-serif; }
.status-strip { position: absolute; top: 0; left: 0; width: 522px; height: 3px; background: #9a9da4; opacity: .9; }
.start { width: 51px; display: grid; place-items: center; }
.start svg { width: 28px; height: 28px; }
.app { width: 60px; margin-right: 2px; display: grid; place-items: center; border: 1px solid transparent; }
.app svg { width: 32px; height: 32px; }
.open { border-color: #b4b2cc; background: #928fbd; outline: 1px solid #62607f; outline-offset: -1px; box-shadow: inset 0 0 0 1px #b4b2cc; }
.current { margin-right: 0; background: #aeacce; border-color: #555369; box-shadow: inset 0 0 0 1px #fff; }
.wallpaper { width: 522px; height: 40px; }
.tray { margin-left: auto; padding-right: 19px; display: flex; align-items: center; gap: 8px; white-space: nowrap; text-align: center; }
.tray svg { width: 16px; height: 16px; }
.lang { margin-left: 6px; }
.tray time { margin-left: 9px; }
```
